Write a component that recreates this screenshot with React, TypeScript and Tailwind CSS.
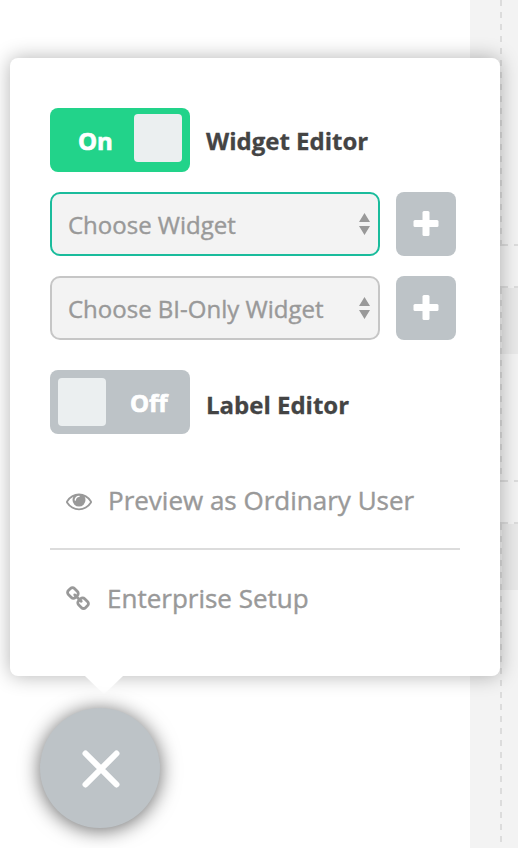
import { useState } from "react";

interface ToggleProps {
  checked: boolean;
  onChange: () => void;
}

interface WidgetPickerProps {
  placeholder: string;
  active?: boolean;
}

function Toggle({ checked, onChange }: ToggleProps) {
  return (
    <button
      onClick={onChange}
      className={`flex h-16 w-[140px] shrink-0 rounded-[8px] text-2xl font-bold leading-8 text-white [-webkit-text-stroke:0.7px_white] ${
        checked ? "bg-[#22d38a] pl-7 pr-2 pt-1.5" : "bg-[#bdc3c7] pl-2 pt-2"
      }`}
    >
      {checked && <span className="mt-[11px] w-14 text-left">On</span>}
      <span className="size-12 shrink-0 rounded-[4px] bg-[#ebeff0]" />
      {!checked && <span className="ml-6 mt-[9px]">Off</span>}
    </button>
  );
}

function WidgetPicker({ placeholder, active }: WidgetPickerProps) {
  return (
    <div className="flex gap-4">
      <div
        className={`flex h-16 w-[330px] items-center justify-between rounded-[10px] border-2 bg-[#f3f3f3] pl-4 pr-2 ${
          active ? "border-[#1abc9c]" : "border-[#c6c6c6]"
        }`}
      >
        <span className="whitespace-nowrap pt-0.5 text-2xl text-[#999] [-webkit-text-stroke:0.4px_#999]">{placeholder}</span>
        <svg className="h-[22px] w-[11px] fill-[#999]" viewBox="0 0 11 22">
          <path d="M5.5 0 11 9H0zM0 13h11l-5.5 9z" />
        </svg>
      </div>
      <button className="flex h-16 w-[60px] items-center justify-center rounded-[8px] bg-[#bdc3c7]">
        <svg className="size-[26px] fill-white" viewBox="0 0 26 26">
          <rect x="9.5" y="0" width="7" height="25" rx="1.5" />
          <rect x="0.5" y="9" width="25" height="7" rx="1.5" />
        </svg>
      </button>
    </div>
  );
}

function EyeIcon() {
  return (
    <svg className="size-[26px] fill-[#999]" viewBox="0 0 1792 1792">
      <path d="M1664 960q-152-236-381-353 61 104 61 225 0 185-131.5 316.5t-316.5 131.5-316.5-131.5-131.5-316.5q0-121 61-225-229 117-381 353 133 205 333.5 326.5t434.5 121.5 434.5-121.5 333.5-326.5zm-720-384q0-20-14-34t-34-14q-125 0-214.5 89.5t-89.5 214.5q0 20 14 34t34 14 34-14 14-34q0-86 61-147t147-61q20 0 34-14t14-34zm848 384q0 34-20 69-140 230-376.5 368.5t-499.5 138.5-499.5-139-376.5-368q-20-35-20-69t20-69q140-229 376.5-368t499.5-139 499.5 139 376.5 368q20 35 20 69z" />
    </svg>
  );
}

function ChainIcon() {
  return (
    <svg className="size-[26px] fill-[#999]" viewBox="0 0 1792 1792">
      <path d="M1520 1216q0-40-28-68l-208-208q-28-28-68-28-42 0-72 32 3 3 19 18.5t21.5 21.5 15 19 13 25.5 3.5 27.5q0 40-28 68t-68 28q-15 0-27.5-3.5t-25.5-13-19-15-21.5-21.5-18.5-19q-33 31-33 73 0 40 28 68l206 207q27 27 68 27 40 0 68-26l147-146q28-28 28-67zm-703-705q0-40-28-68l-206-207q-28-28-68-28-39 0-68 27l-147 146q-28 28-28 67 0 40 28 68l208 208q27 27 68 27 42 0 72-31-3-3-19-18.5t-21.5-21.5-15-19-13-25.5-3.5-27.5q0-40 28-68t68-28q15 0 27.5 3.5t25.5 13 19 15 21.5 21.5 18.5 19q33-31 33-73zm895 705q0 120-85 203l-147 146q-83 83-203 83-121 0-204-85l-206-207q-83-83-83-203 0-123 88-209l-88-88q-86 88-208 88-120 0-204-84l-208-208q-84-84-84-204t85-203l147-146q83-83 203-83 121 0 204 85l206 207q83 83 83 203 0 123-88 209l88 88q86-88 208-88 120 0 204 84l208 208q84 84 84 204z" />
    </svg>
  );
}

// Horizontal edge of a dashed drop zone
function DashRow() {
  return (
    <div className="h-0.5 w-full bg-[repeating-linear-gradient(to_right,#dcdcdc_0_8px,transparent_8px_14px)]" />
  );
}

// Vertical edge of a dashed drop zone
function DashColumn() {
  return (
    <div className="w-0.5 shrink-0 bg-[repeating-linear-gradient(to_bottom,#dcdcdc_0_6px,transparent_6px_12px)]" />
  );
}

export default function App() {
  const [widgetEditor, setWidgetEditor] = useState(true);
  const [labelEditor, setLabelEditor] = useState(false);

  return (
    <div className="relative h-[848px] w-[518px] overflow-hidden bg-white font-['Open_Sans',sans-serif]">
      {/* Page behind the menu */}
      <div className="ml-[470px] h-full bg-[#f3f3f3] pl-[30px]">
        <div className="flex h-[244px]">
          <DashColumn />
        </div>
        <DashRow />
        <div className="mt-10">
          <DashRow />
          <div className="flex h-48">
            <DashColumn />
            <div className="h-[66px] flex-1 bg-[#e9e9e9]" />
          </div>
          <DashRow />
        </div>
        <div className="mt-10">
          <DashRow />
          <div className="flex h-[324px]">
            <DashColumn />
            <div className="h-[66px] flex-1 bg-[#e9e9e9]" />
          </div>
        </div>
      </div>

      {/* Popover */}
      <div className="absolute left-[10px] top-[58px] h-[618px] w-[490px] rounded-[8px] bg-white px-10 pt-[50px] shadow-[0_0_20px_rgba(0,0,0,0.3)]">
        <div className="flex gap-4">
          <Toggle checked={widgetEditor} onChange={() => setWidgetEditor(!widgetEditor)} />
          <span className="mt-[17px] text-2xl font-bold text-[#444] [-webkit-text-stroke:0.3px_#444]">Widget Editor</span>
        </div>
        <div className="my-5 flex flex-col gap-5">
          <WidgetPicker placeholder="Choose Widget" active />
          <WidgetPicker placeholder="Choose BI-Only Widget" />
        </div>
        <div className="mt-[30px] flex gap-4">
          <Toggle checked={labelEditor} onChange={() => setLabelEditor(!labelEditor)} />
          <span className="mt-[19px] text-2xl font-bold text-[#444] [-webkit-text-stroke:0.3px_#444]">Label Editor</span>
        </div>

        <div className="mt-12 flex flex-col text-[26px] text-[#999] [-webkit-text-stroke:0.4px_#999]">
          <a className="flex h-[68px] items-start gap-4 border-b-2 border-[#dcdcdc] pl-4">
            <span className="pt-1.5">
              <EyeIcon />
            </span>
            <span className="whitespace-nowrap leading-9">Preview as Ordinary User</span>
          </a>
          <a className="mt-[30px] flex h-9 items-start gap-4 pl-[15px]">
            <span className="pt-1.5">
              <ChainIcon />
            </span>
            <span className="whitespace-nowrap leading-9">Enterprise Setup</span>
          </a>
        </div>

        {/* Pointer to the close button */}
        <svg className="absolute left-[70px] top-full h-[22px] w-11" viewBox="0 0 44 22">
          <path d="M5 0h38L24 18.500z" fill="#fff" />
        </svg>
      </div>

      <button className="absolute left-10 top-[708px] flex size-[120px] items-center justify-center rounded-full bg-[#bdc3c7] shadow-[0_2px_20px_rgba(0,0,0,0.6)]">
        <svg className="ml-0.5 mt-0.5 size-[38px] stroke-white" viewBox="0 0 38 38">
          <path d="M3.500 3.500l31 31M34.500 3.500l-31 31" strokeWidth="6" strokeLinecap="round" />
        </svg>
      </button>
    </div>
  );
}
